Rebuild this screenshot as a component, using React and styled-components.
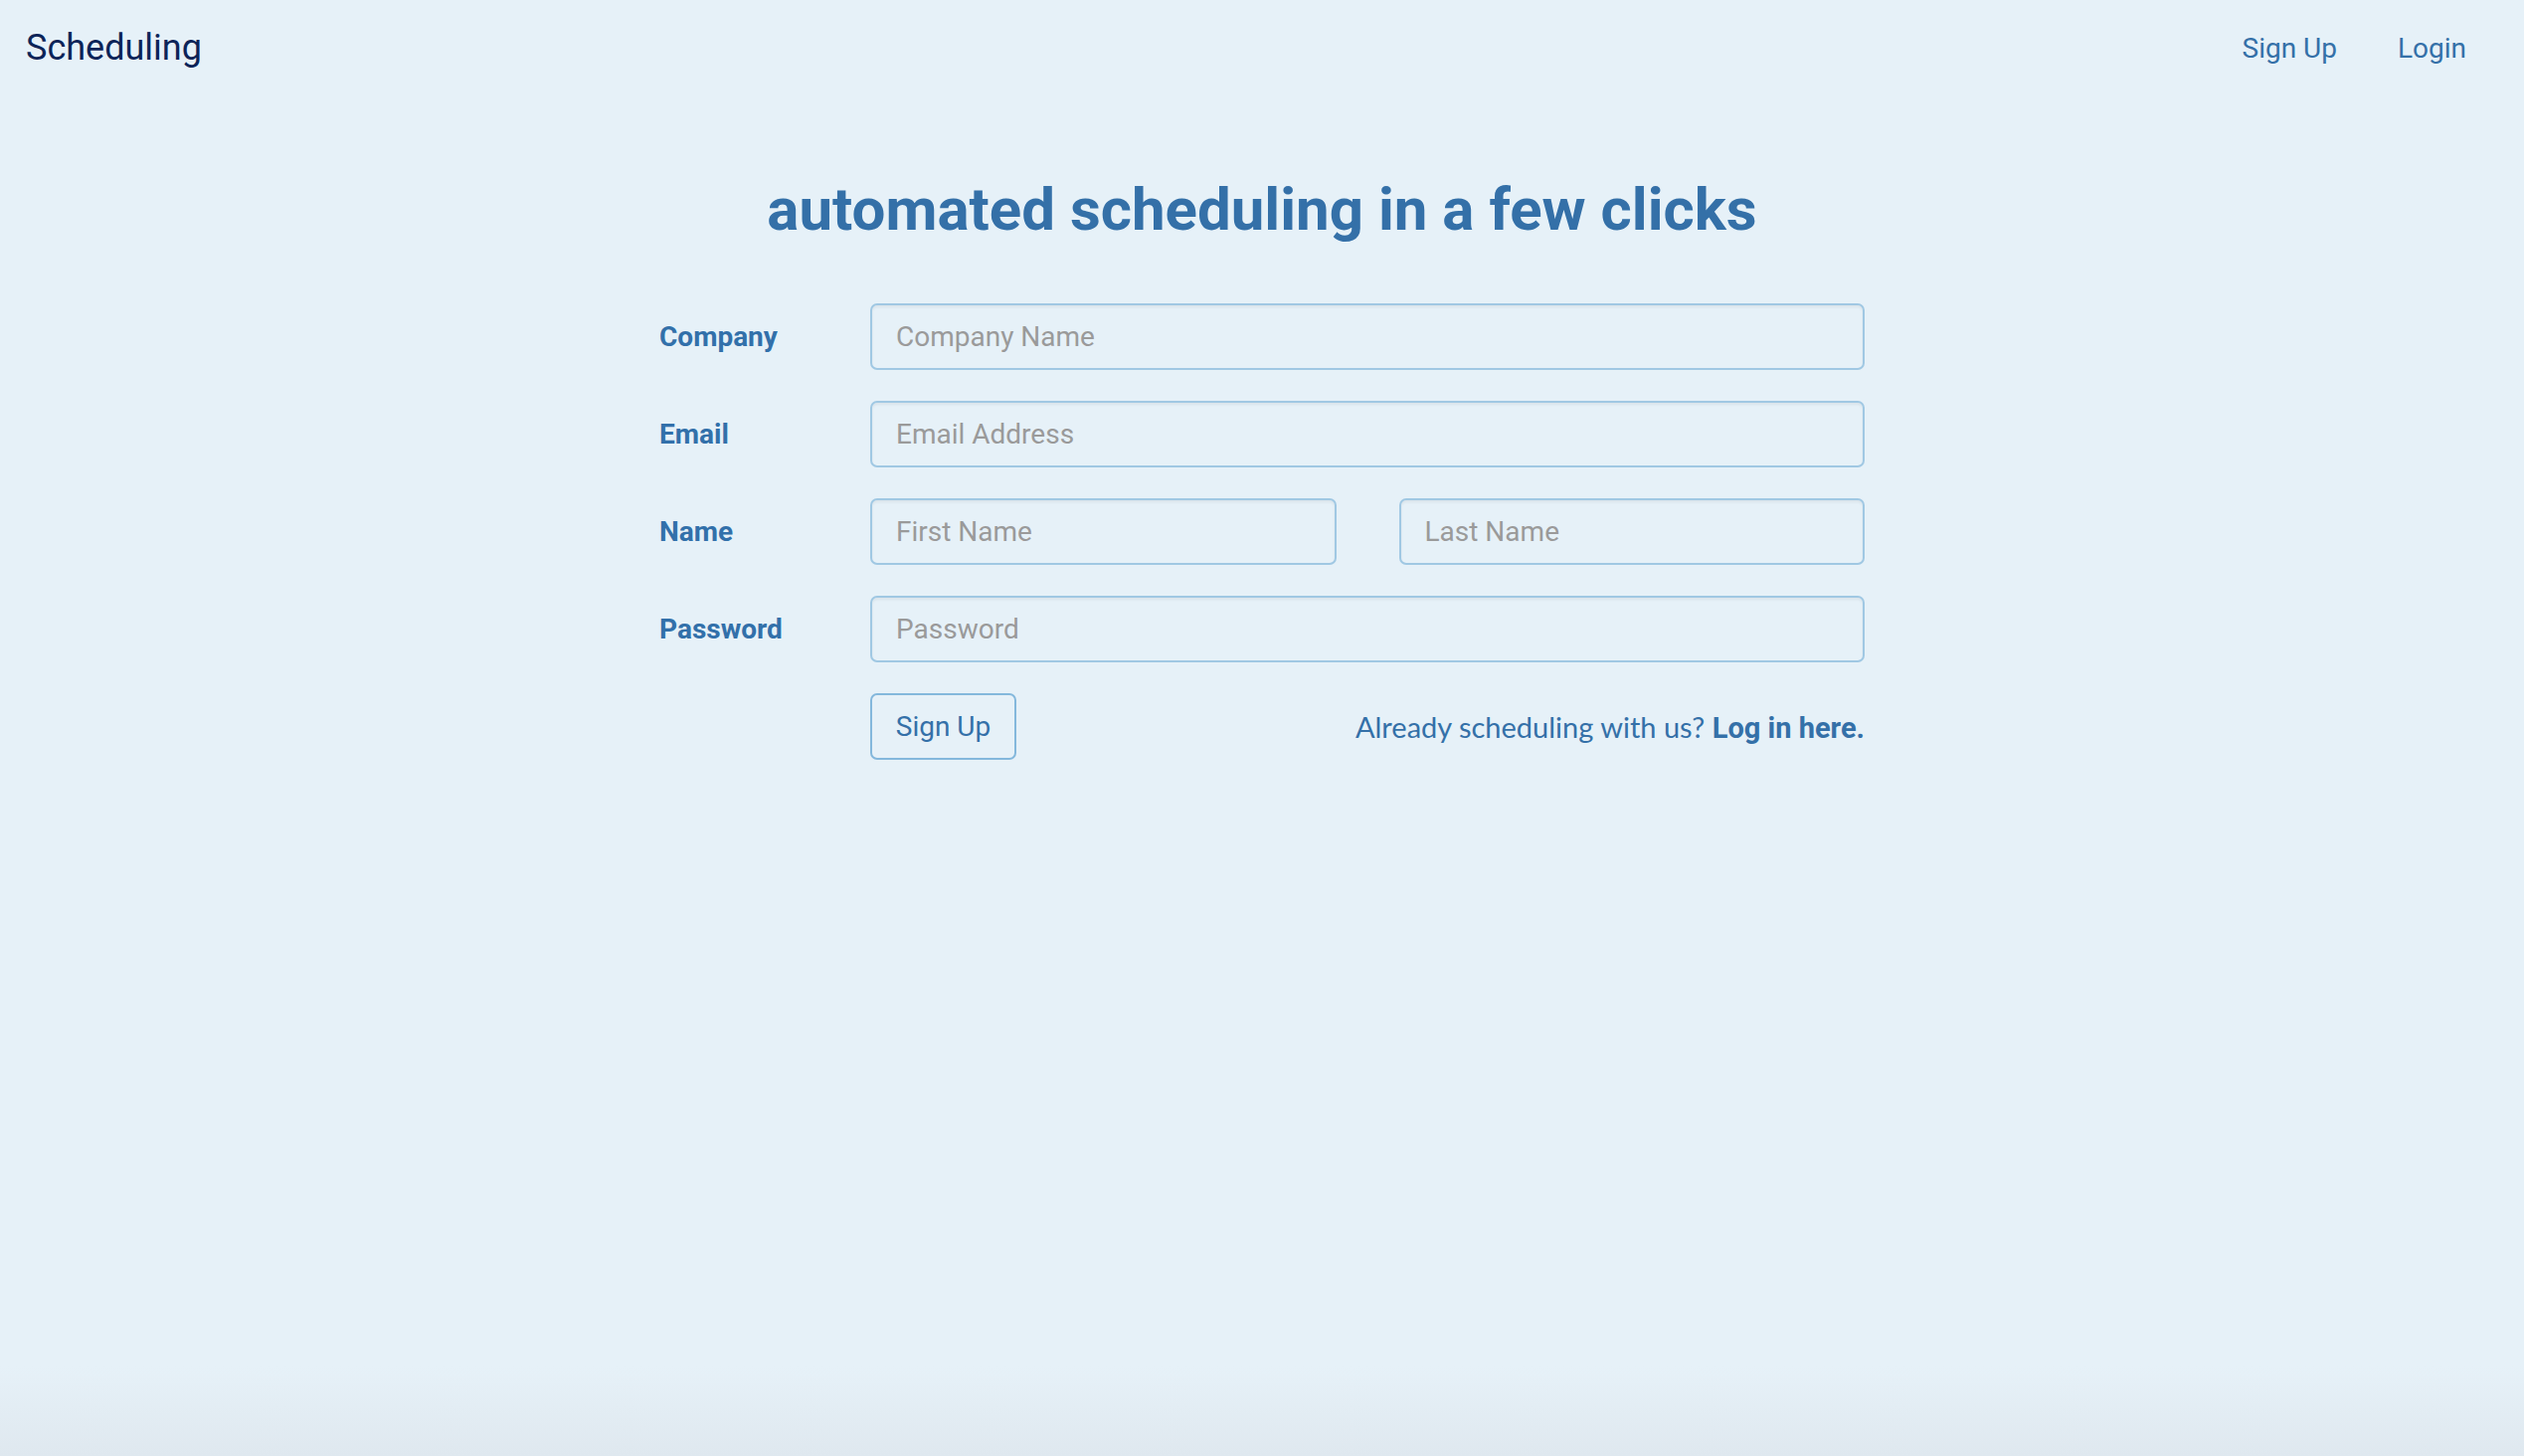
import React from 'react';
import styled, { createGlobalStyle } from 'styled-components';

const GlobalStyle = createGlobalStyle`
  html, body {
    margin: 0;
    padding: 0;
  }

  body {
    min-height: 100vh;
    font-family: Roboto, "Liberation Sans", sans-serif;
    background: linear-gradient(
      to bottom,
      #e6f1f8 0,
      #e6f1f8 calc(100vh - 90px),
      #dfe8ef 100vh
    );
    background-color: #e6f1f8;
  }
`;

const App = () => {
  return (
    <>
      <GlobalStyle />
      <Header>
        <Brand>Scheduling</Brand>
        <Nav>
          <NavLink href='#'>Sign Up</NavLink>
          <NavLink href='#'>Login</NavLink>
        </Nav>
      </Header>

      <Main>
        <Title>automated scheduling in a few clicks</Title>

        <Form onSubmit={(e) => e.preventDefault()}>
          <Row>
            <Label>Company</Label>
            <Input placeholder='Company Name' />
          </Row>
          <Row>
            <Label>Email</Label>
            <Input placeholder='Email Address' />
          </Row>
          <Row>
            <Label>Name</Label>
            <Split>
              <Input placeholder='First Name' />
              <Input placeholder='Last Name' />
            </Split>
          </Row>
          <Row>
            <Label>Password</Label>
            <Input type='password' placeholder='Password' />
          </Row>
          <Row>
            <span />
            <Actions>
              <Button type='submit'>Sign Up</Button>
              <Already>
                Already scheduling with us? <strong>Log in here.</strong>
              </Already>
            </Actions>
          </Row>
        </Form>
      </Main>
    </>
  );
};

export default App;

const Header = styled.header`
  display: flex;
  justify-content: space-between;
  align-items: center;
  height: 96px;
  padding: 0 58px 0 26px;
`;

const Brand = styled.div`
  font-size: 36px;
  color: #0c2458;
`;

const Nav = styled.nav`
  display: flex;
  gap: 61px;
`;

const NavLink = styled.a`
  font-size: 28px;
  color: #3470a8;
  text-decoration: none;
`;

const Main = styled.main`
  display: flex;
  flex-direction: column;
  align-items: center;
`;

const Title = styled.h1`
  margin: 85px 0 64px;
  font-size: 60px;
  font-weight: 700;
  line-height: 1;
  color: #3470a8;
`;

const Form = styled.form`
  width: 1212px;
  display: flex;
  flex-direction: column;
  gap: 31px;
`;

const Row = styled.div`
  display: grid;
  grid-template-columns: 212px 1fr;
  align-items: center;
`;

const Label = styled.label`
  font-size: 28px;
  font-weight: 700;
  color: #3270aa;
`;

const Split = styled.div`
  display: grid;
  grid-template-columns: 1fr 1fr;
  gap: 63px;
`;

const Input = styled.input`
  box-sizing: border-box;
  width: 100%;
  height: 67px;
  padding: 0 24px;
  border: 2px solid #a0c8e3;
  border-radius: 7px;
  background: transparent;
  box-shadow: inset 0 2px 3px rgba(0, 0, 0, 0.06);
  font-family: Roboto, "Liberation Sans", sans-serif;
  font-size: 28px;
  color: #333;
  outline: none;

  &::placeholder {
    color: #9a9a9a;
  }
`;

const Actions = styled.div`
  display: flex;
  justify-content: space-between;
  align-items: center;
`;

const Button = styled.button`
  box-sizing: border-box;
  width: 147px;
  height: 67px;
  border: 2px solid #84b8dc;
  border-radius: 7px;
  background: transparent;
  font-family: Roboto, "Liberation Sans", sans-serif;
  font-size: 28px;
  color: #3470a8;
  cursor: pointer;
`;

const Already = styled.div`
  font-family: Lato, "Open Sans", sans-serif;
  font-size: 29px;
  color: #3470a8;

  strong {
    font-family: Roboto, "Liberation Sans", sans-serif;
    font-weight: 700;
  }
`;
